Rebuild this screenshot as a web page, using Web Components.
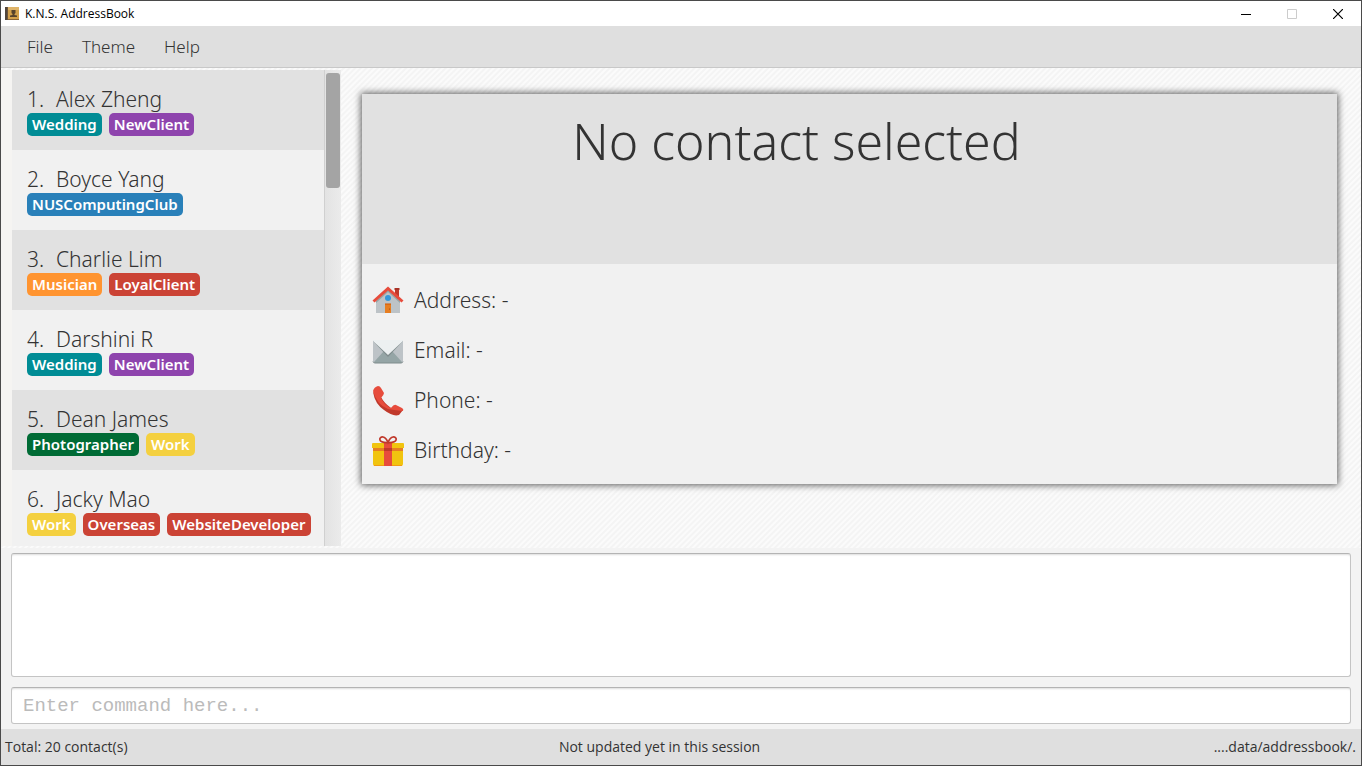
<!DOCTYPE html>
<html lang="en">
<head>
<meta charset="utf-8">
<title>K.N.S. AddressBook</title>
<style>
html,body{margin:0;height:100%}
body{font-family:"Noto Sans","Open Sans",sans-serif;font-weight:300;color:#333}
</style>
</head>
<body>
<address-book></address-book>
<script>
const define = (name, html) => {
  const t = document.createElement('template');
  t.innerHTML = html;
  customElements.define(name, class extends HTMLElement {
    constructor() {
      super();
      this.attachShadow({mode: 'open'}).append(t.content.cloneNode(true));
    }
  });
};

define('title-bar', `
<style>
:host{display:flex;align-items:center;height:25px;background:#fff;color:#000;font-family:"Open Sans","Noto Sans",sans-serif;font-weight:400;font-size:12px}
svg{display:block}
.logo{margin:0 5px 0 4px}
h1{font:inherit;line-height:16px;margin:0;flex:1}
button{width:46px;height:25px;border:0;padding:0;background:none;display:grid;place-items:center}
</style>
<svg class="logo" width="15" height="15" viewBox="0 0 15 15"><path d="M1 1h13v13H1z" fill="#8a6437"/><path d="M3 1h11v12H3z" fill="#d3a04b"/><path d="M3 1h11v3H3z" fill="#dfb469"/><path d="M0 1h2.500v13H0z" fill="#51463d"/><path d="M6.500 4h4v3l-1 1v1l2.500.5V11H5V9.500L7.500 9V8l-1-1z" fill="#57422b"/></svg>
<h1><slot></slot></h1>
<button aria-label="Minimize"><svg width="10" height="10"><path d="M0 5.500h10" stroke="#000"/></svg></button>
<button aria-label="Maximize" disabled><svg width="10" height="10"><path d="M.5.500h9v9h-9z" fill="none" stroke="#ccc"/></svg></button>
<button aria-label="Close"><svg width="10" height="10"><path d="M0 0l10 10M10 0L0 10" stroke="#000" stroke-width="1.200"/></svg></button>`);

define('menu-strip', `
<style>
:host{display:flex;gap:13px;height:41px;padding:0 18px;background:#dfdfdf;border-bottom:1px solid #c8c8c8}
</style><slot></slot>`);

define('menu-entry', `
<style>
:host{display:flex}
button{font:inherit;font-size:17px;color:inherit;border:0;background:none;padding:0 8px}
</style><button><slot></slot></button>`);

define('contact-tag', `
<style>
:host{display:block;height:23px;line-height:23px;padding:0 5px;border-radius:5px;background:var(--c);color:#fff;font-size:15px;font-weight:600;white-space:nowrap}
:host([tone=teal]){--c:#008c95}
:host([tone=purple]){--c:#8e44ad}
:host([tone=blue]){--c:#2980b9}
:host([tone=orange]){--c:#ff9430}
:host([tone=red]){--c:#cb4335}
:host([tone=green]){--c:#006b35}
:host([tone=yellow]){--c:#f4d03f}
</style><slot></slot>`);

define('contact-card', `
<style>
:host{display:block;height:80px;box-sizing:border-box;padding:15px 15px 0;background:#f1f1f1}
:host(:nth-child(odd)){background:#e1e1e1}
.name{display:grid;grid-template-columns:29px 1fr;font-size:21px;line-height:28px;white-space:nowrap}
.tags{display:flex;gap:7px}
</style>
<div class="name"><slot name="num"></slot><slot name="name"></slot></div>
<div class="tags"><slot></slot></div>`);

define('contact-list', `
<style>
:host{display:flex;width:329px;min-height:0}
.items{flex:1;overflow:hidden}
.bar{width:14px;padding:3px 1px 0;border-left:1px solid #d0d0d0;background:linear-gradient(90deg,#e3e3e3,#ebebeb)}
.thumb{height:115px;background:#a4a4a4;border-radius:3px}
</style>
<div class="items"><slot></slot></div>
<div class="bar"><div class="thumb"></div></div>`);

define('detail-row', `
<style>
:host{display:flex;align-items:center;gap:10px;height:50px;font-size:21px}
span{padding-bottom:2px}
</style><slot name="icon"></slot><span><slot></slot></span>`);

define('contact-details', `
<style>
:host{display:block;background:#f1f1f1;box-shadow:0 0 7px 1px rgba(0,0,0,.65)}
header{display:grid;grid-template-columns:1fr 106px;height:170px;background:#e1e1e1;text-align:center}
h2{font-size:50px;line-height:68px;font-weight:300;margin:13px 0 0;white-space:nowrap}
.rows{padding:12px 10px 8px}
svg{display:block;width:32px;height:32px}
</style>
<header><h2>No contact selected</h2></header>
<div class="rows">
<detail-row><svg slot="icon" viewBox="0 0 32 32"><path d="M23 4h4v10h-4z" fill="#c0392b"/><path d="M22.500 3h5v2h-5z" fill="#a93226"/><path d="M4 16L16 5l12 11v12H4z" fill="#bdc3c7"/><path d="M4 16L16 5l12 11v2L16 7 4 18z" fill="#95a5a6"/><path d="M16 1.500L0.500 15.500l2 2L16 5.500l13.500 12 2-2z" fill="#e74c3c"/><circle cx="16" cy="13" r="3" fill="#3498db"/><path d="M13 19h6v9h-6z" fill="#e67e22"/><path d="M13 18.500h6v1h-6z" fill="#d35400"/><circle cx="17.500" cy="24" r=".6" fill="#a84300"/></svg>Address: -</detail-row>
<detail-row><svg slot="icon" viewBox="0 0 32 32"><rect x="1" y="5" width="30" height="23" rx="2" fill="#bdc3c7"/><path d="M2 27L12 16h8l10 11-1 1H3z" fill="#95a5a6"/><path d="M1 6l15 16L31 6" fill="#7f8c8d"/><path d="M1 6q0-1 1-1h28q1 0 1 1L16 20z" fill="#ecf0f1"/><path d="M1 26.500q.5 1.500 2 1.500h26q1.500 0 2-1.500" stroke="#7f8c8d" fill="none"/></svg>Email: -</detail-row>
<detail-row><svg slot="icon" viewBox="0 0 32 32"><path d="M1 7q2 12 11 18 9 7 15 5l4-5-7-4-5 2Q12 18 9 12z" fill="#c0392b"/><path d="M1 6q1-4 5-5 2 0 3 2l3 5q0 2-3 5 3 7 10 10 3-4 5-3l6 3q2 1 1 3-10-1-15-2Q5 20 1 6z" fill="#e74c3c"/></svg>Phone: -</detail-row>
<detail-row><svg slot="icon" viewBox="0 0 32 32"><path d="M1 12h30v17q0 2-2 2H3q-2 0-2-2z" fill="#f1c40f"/><path d="M1 13h30v3H1z" fill="#e67e22"/><path d="M2 30.500h28" stroke="#f39c12"/><path d="M0 9q0-1 1-1h30q1 0 1 1v4H0z" fill="#f1c40f"/><path d="M12 8h8v23h-8z" fill="#e74c3c"/><path d="M12 13h8v3h-8z" fill="#c0392b"/><path d="M16 7.500C5 8 7 1.500 11 2c3 .5 4 3 5 5.500C17 5 18 2.500 21 2c4-.5 6 6-5 5.500z" fill="none" stroke="#c0392b" stroke-width="1.700"/></svg>Birthday: -</detail-row>
</div>`);

define('result-display', `
<style>
:host{display:block;margin:5px 10px 0}
textarea{display:block;box-sizing:border-box;width:100%;height:124px;border:1px solid #c4c4c4;border-top-color:#b4b4b4;border-radius:3px;background:#fff;box-shadow:inset 0 2px 2px -1px #ddd;resize:none;padding:8px}
</style><textarea readonly aria-label="Result"></textarea>`);

define('command-box', `
<style>
:host{display:block;margin:10px 10px 5px}
input{display:block;box-sizing:border-box;width:100%;height:37px;border:1px solid #c4c4c4;border-top-color:#b4b4b4;border-radius:3px;background:#fff;box-shadow:inset 0 2px 2px -1px #ddd;padding:0 11px;font:400 19px "Liberation Mono",monospace;color:#333}
input::placeholder{color:#bbb;opacity:1}
</style><input type="text" aria-label="Command" placeholder="Enter command here...">`);

define('status-bar', `
<style>
:host{display:grid;grid-template-columns:41% 1fr auto;align-items:center;box-sizing:border-box;height:36px;padding:0 5px 2px 4px;background:#dfdfdf;font-family:"Open Sans","Noto Sans",sans-serif;font-size:14px;font-weight:400}
</style><slot></slot>`);

define('address-book', `
<style>
:host{display:flex;flex-direction:column;box-sizing:border-box;min-height:100vh;border:1px solid #4a4a4a;background:#f3f3f3}
main{flex:1 0 0;min-height:480px;display:flex;box-sizing:border-box;padding:2px 0;background:repeating-linear-gradient(135deg,#fbfbfb 0 1px,#f4f4f4 2px 3px,#fbfbfb 4px)}
contact-list{flex:none;height:476px;padding-left:11px;background:#f5f4f2}
contact-details{flex:1;align-self:flex-start;margin:24px 24px 0 21px}
</style>
<title-bar>K.N.S. AddressBook</title-bar>
<menu-strip><menu-entry>File</menu-entry><menu-entry>Theme</menu-entry><menu-entry>Help</menu-entry></menu-strip>
<main>
<contact-list>
<contact-card><span slot="num">1.</span><span slot="name">Alex Zheng</span><contact-tag tone="teal">Wedding</contact-tag><contact-tag tone="purple">NewClient</contact-tag></contact-card>
<contact-card><span slot="num">2.</span><span slot="name">Boyce Yang</span><contact-tag tone="blue">NUSComputingClub</contact-tag></contact-card>
<contact-card><span slot="num">3.</span><span slot="name">Charlie Lim</span><contact-tag tone="orange">Musician</contact-tag><contact-tag tone="red">LoyalClient</contact-tag></contact-card>
<contact-card><span slot="num">4.</span><span slot="name">Darshini R</span><contact-tag tone="teal">Wedding</contact-tag><contact-tag tone="purple">NewClient</contact-tag></contact-card>
<contact-card><span slot="num">5.</span><span slot="name">Dean James</span><contact-tag tone="green">Photographer</contact-tag><contact-tag tone="yellow">Work</contact-tag></contact-card>
<contact-card><span slot="num">6.</span><span slot="name">Jacky Mao</span><contact-tag tone="yellow">Work</contact-tag><contact-tag tone="red">Overseas</contact-tag><contact-tag tone="red">WebsiteDeveloper</contact-tag></contact-card>
</contact-list>
<contact-details></contact-details>
</main>
<result-display></result-display>
<command-box></command-box>
<status-bar><span>Total: 20 contact(s)</span><span>Not updated yet in this session</span><span>....data/addressbook/.</span></status-bar>`);
</script>
</body>
</html>
